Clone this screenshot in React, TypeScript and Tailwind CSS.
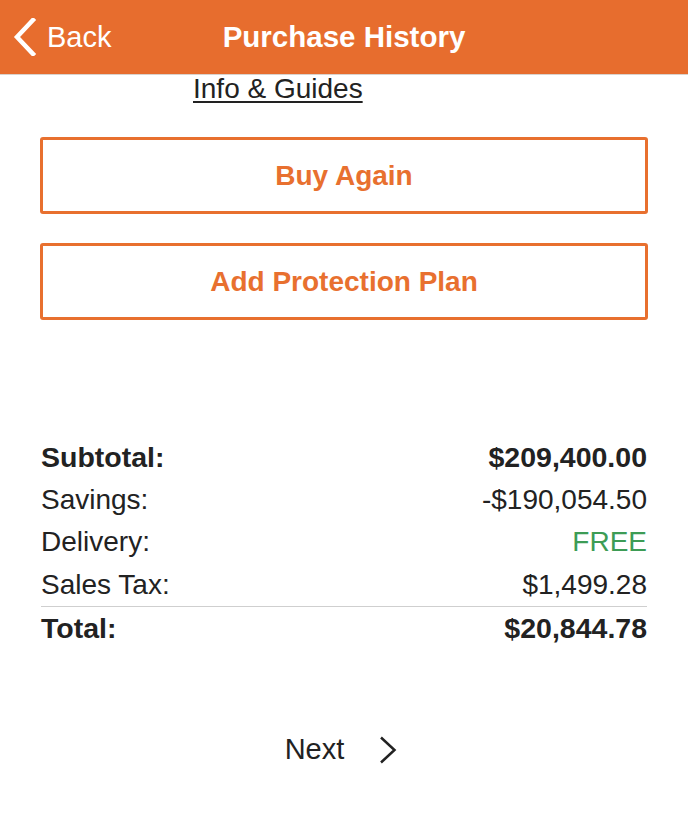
import React from "react";

const rows = [
  { label: "Subtotal:", value: "$209,400.00", bold: true },
  { label: "Savings:", value: "-$190,054.50" },
  { label: "Delivery:", value: "FREE", green: true },
  { label: "Sales Tax:", value: "$1,499.28" },
];

export default function App() {
  return (
    <div className="min-h-[818px] bg-white font-['Liberation_Sans',Arial,sans-serif] text-[#222]">
      {/* Header */}
      <header className="relative flex h-[75px] items-center justify-center border-b border-[#d9d2cc] bg-[#e76d2e] text-white">
        <button className="absolute left-[12px] top-0 flex h-full items-center gap-[10px]">
          <svg width="25" height="38" viewBox="0 0 25 38" fill="none">
            <path d="M21 2 L5 19 L21 36" stroke="white" strokeWidth="4.5" strokeLinecap="square" />
          </svg>
          <span className="text-[29px] leading-none">Back</span>
        </button>
        <h1 className="text-[29.5px] font-bold leading-none">Purchase History</h1>
      </header>

      <div className="pl-[193px] text-[28px] leading-none">
        <a className="underline decoration-[1.5px] underline-offset-[3px]">Info &amp; Guides</a>
      </div>

      {/* Actions */}
      <div className="mx-[40px] mt-[34px] flex flex-col gap-[29px]">
        <button className="flex h-[77px] items-center justify-center rounded-[3px] border-[3px] border-[#e8702f] text-[28px] font-bold text-[#e8702f]">
          Buy Again
        </button>
        <button className="flex h-[77px] items-center justify-center rounded-[3px] border-[3px] border-[#e8702f] text-[28px] font-bold text-[#e8702f]">
          Add Protection Plan
        </button>
      </div>

      {/* Summary */}
      <div className="mx-[41px] mt-[116px] text-[28px]">
        {rows.map((r) => (
          <div key={r.label} className="flex h-[42.5px] items-center justify-between">
            <span className={r.bold ? "text-[28.5px] font-bold" : ""}>{r.label}</span>
            <span className={r.bold ? "text-[28.5px] font-bold" : r.green ? "text-[#3d9c55]" : ""}>{r.value}</span>
          </div>
        ))}
        <div className="flex h-[44px] items-center justify-between border-t-[1.5px] border-[#cfcfcf] text-[28.5px] font-bold">
          <span>Total:</span>
          <span>$20,844.78</span>
        </div>
      </div>

      {/* Pager */}
      <div className="mt-[85px] flex items-center justify-center gap-[35px] pr-[6px]">
        <span className="text-[29px] leading-none">Next</span>
        <svg width="18" height="28" viewBox="0 0 18 28" fill="none">
          <path d="M2 1.5 L15.5 14 L2 26.5" stroke="#222" strokeWidth="2.5" />
        </svg>
      </div>
    </div>
  );
}
